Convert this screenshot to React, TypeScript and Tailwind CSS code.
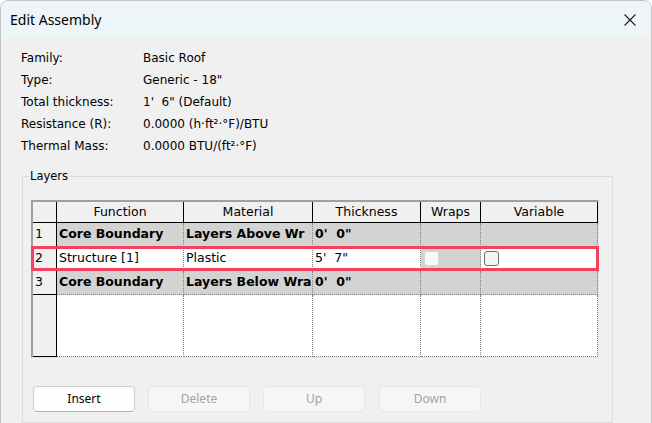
import React from "react";

const cols = "grid grid-cols-[24px_127px_129px_108px_60px_117px]";

function Head({ children }: { children?: React.ReactNode }) {
  return (
    <div className="h-[21px] flex items-center justify-center border-r border-b border-black bg-[#f0f0f0] text-black">
      {children}
    </div>
  );
}

function RowNum({ n, h = "h-[24px]" }: { n?: string; h?: string }) {
  return (
    <div className={`${h} flex items-center pl-[2px] border-r border-b border-black bg-[#f0f0f0]`}>{n}</div>
  );
}

function Cell({
  children,
  gray,
  bold,
  h = "h-[24px]",
}: {
  children?: React.ReactNode;
  gray?: boolean;
  bold?: boolean;
  h?: string;
}) {
  return (
    <div
      className={`${h} flex items-center pl-[2px] overflow-hidden whitespace-pre border-r border-b border-dotted border-[#808080] ${
        gray ? "bg-[#d3d3d3]" : "bg-white"
      } ${bold ? "font-bold" : ""}`}
    >
      {children}
    </div>
  );
}

export default function App() {
  const info = [
    ["Family:", "Basic Roof"],
    ["Type:", 'Generic - 18"'],
    ["Total thickness:", '1\'  6" (Default)'],
    ["Resistance (R):", "0.0000 (h·ft²·°F)/BTU"],
    ["Thermal Mass:", "0.0000 BTU/(ft²·°F)"],
  ];

  return (
    <div className="w-[652px] h-[423px] bg-white overflow-hidden text-[12px] text-black font-['Noto_Sans',sans-serif]">
      <div className="h-[440px] flex flex-col border border-[#c4c4c4] rounded-t-[8px] overflow-hidden">
        {/* title bar */}
        <div className="h-[37px] shrink-0 bg-[#eef5f9] flex items-center justify-between pl-[9px] pr-[15px]">
          <span className="text-[14px] text-black">Edit Assembly</span>
          <svg width="12" height="12" viewBox="0 0 12 12" fill="none" stroke="#1a1a1a" strokeWidth="1.1">
            <path d="M0.5 0.5 L11.5 11.5 M11.5 0.5 L0.5 11.5" />
          </svg>
        </div>

        {/* body */}
        <div className="flex-1 bg-[#f0f0f0] pt-[9px] pl-[20px] font-['DejaVu_Sans',sans-serif]">
          <div className="grid grid-cols-[122px_1fr] text-[12px]">
            {info.map(([k, v]) => (
              <React.Fragment key={k}>
                <div className="h-[22px] flex items-center">{k}</div>
                <div className="h-[22px] flex items-center whitespace-pre">{v}</div>
              </React.Fragment>
            ))}
          </div>

          <fieldset className="mt-[11px] ml-[1px] w-[591px] h-[255px] border border-[#dcdcdc] pl-[8px] pt-[16px]">
            <legend className="-ml-[2px] px-[1px] leading-[16px] text-[11.5px]">Layers</legend>

            <div className="relative w-[568px] text-[12.5px] border-l-2 border-t-2 border-[#a0a0a0] border-r border-b border-r-[#e4e4e4] border-b-[#e4e4e4]">
              <div className={cols}>
                <Head />
                <Head>Function</Head>
                <Head>Material</Head>
                <Head>Thickness</Head>
                <Head>Wraps</Head>
                <Head>Variable</Head>

                <RowNum n="1" />
                <Cell gray bold>Core Boundary</Cell>
                <Cell gray bold>Layers Above Wr</Cell>
                <Cell gray bold>{'0\'  0"'}</Cell>
                <Cell gray />
                <Cell gray />

                <RowNum n="2" />
                <Cell>Structure [1]</Cell>
                <Cell>Plastic</Cell>
                <Cell>{'5\'  7"'}</Cell>
                <Cell gray>
                  <span className="ml-[1px] w-[15px] h-[15px] rounded-[3px] border border-[#d4d4d4] bg-[#f8f8f8]" />
                </Cell>
                <Cell>
                  <span className="ml-[1px] w-[15px] h-[15px] rounded-[3px] border border-[#6e6e6e] bg-[#f4f4f4]" />
                </Cell>

                <RowNum n="3" />
                <Cell gray bold>Core Boundary</Cell>
                <Cell gray bold>Layers Below Wra</Cell>
                <Cell gray bold>{'0\'  0"'}</Cell>
                <Cell gray />
                <Cell gray />

                <RowNum h="h-[62px]" />
                <Cell h="h-[62px]" />
                <Cell h="h-[62px]" />
                <Cell h="h-[62px]" />
                <Cell h="h-[62px]" />
                <Cell h="h-[62px]" />
              </div>

              {/* selected row highlight */}
              <div className="absolute -left-[2px] top-[44px] w-[568px] h-[25px] border-[3px] border-[#f5405e] pointer-events-none" />
            </div>

            <div className="mt-[28px] ml-[2px] flex gap-[13px] text-[12px] font-['Noto_Sans',sans-serif]">
              <button className="w-[102px] h-[26px] rounded-[4px] bg-[#fdfdfd] border border-[#cfcfcf] border-b-[#b5b5b5] text-black">
                Insert
              </button>
              <button disabled className="w-[102px] h-[26px] rounded-[4px] bg-[#f6f6f6] border border-[#e6e6e6] text-[#a3a3a3]">
                Delete
              </button>
              <button disabled className="w-[102px] h-[26px] rounded-[4px] bg-[#f6f6f6] border border-[#e6e6e6] text-[#a3a3a3]">
                Up
              </button>
              <button disabled className="w-[102px] h-[26px] rounded-[4px] bg-[#f6f6f6] border border-[#e6e6e6] text-[#a3a3a3] ml-[1px]">
                Down
              </button>
            </div>
          </fieldset>
        </div>
      </div>
    </div>
  );
}
